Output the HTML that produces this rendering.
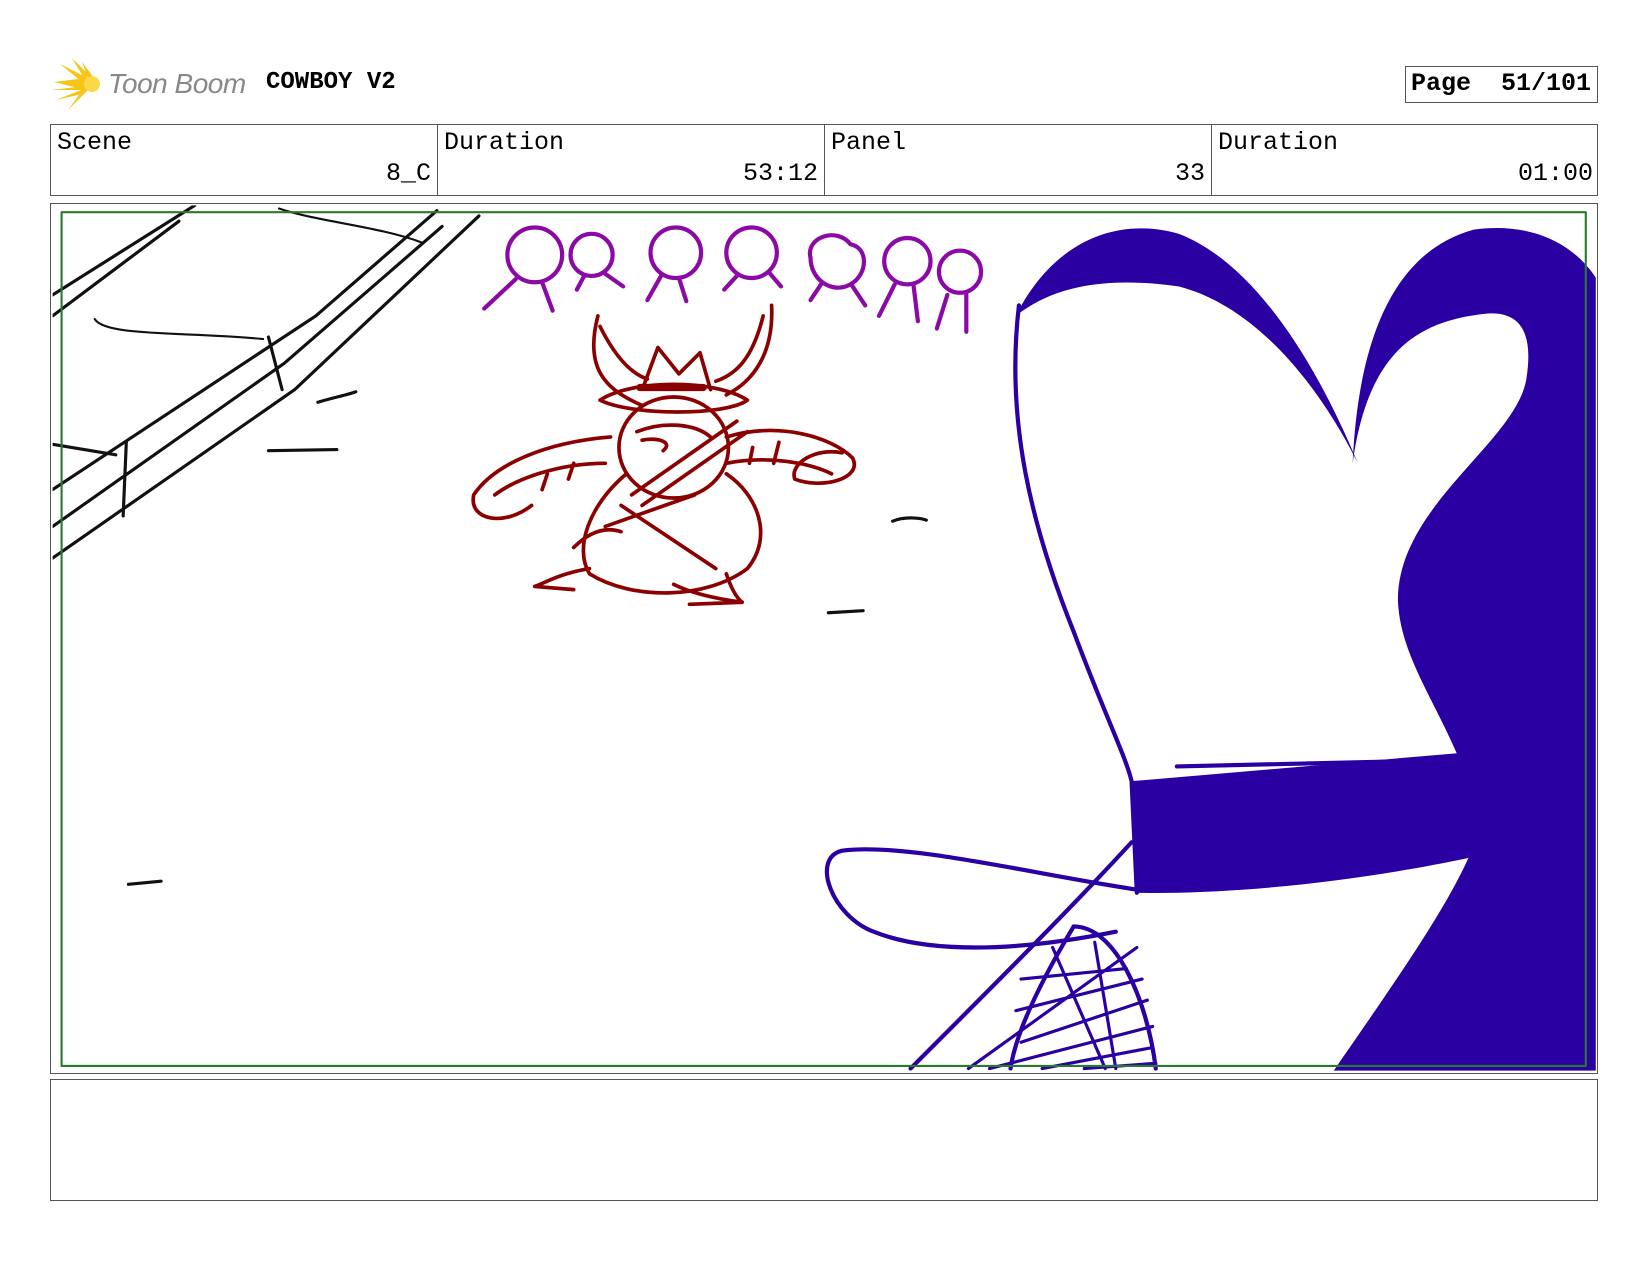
<!DOCTYPE html>
<html><head><meta charset="utf-8"><style>
body{margin:0;width:1650px;height:1275px;background:#fff;position:relative;overflow:hidden;font-family:"Liberation Mono",monospace}
.abs{position:absolute}
.tb{position:absolute;top:124px;height:72px;border:1px solid #555;box-sizing:border-box;width:1548px;left:50px}
.cell{position:absolute;top:0;height:70px;width:387px;border-right:1px solid #555;box-sizing:border-box}
.cell .l{position:absolute;left:6px;top:3px;font-size:25px}
.cell .v{position:absolute;right:6px;top:34px;font-size:25px}
</style></head><body>
<svg class="abs" style="left:52px;top:58px" width="56" height="54" viewBox="0 0 56 54">
<g fill="#f5c518"><path d="M2,24 L34,20 L40,26 L34,32 Z"/><path d="M8,6 L36,20 L30,24Z"/><path d="M20,0 L38,18 L32,20Z"/><path d="M4,42 L34,30 L30,36Z"/><path d="M16,52 L36,32 L32,30Z"/><path d="M30,4 L42,20 L36,20Z"/><path d="M0,32 L32,28 L32,32Z"/></g>
<circle cx="40" cy="26" r="8" fill="#fbd84a"/></svg>
<div class="abs" style="left:108px;top:68px;font-family:'Liberation Sans',sans-serif;font-style:italic;font-size:28px;color:#888;letter-spacing:-0.5px">Toon Boom</div>
<div class="abs" style="left:266px;top:69px;font-size:24px;font-weight:bold">COWBOY V2</div>
<div class="abs" style="left:1405px;top:66px;width:193px;height:37px;border:1px solid #555;box-sizing:border-box;font-size:25px;font-weight:bold;line-height:34px;text-align:right;padding-right:6px;white-space:pre">Page  51/101</div>
<div class="tb">
<div class="cell" style="left:0"><span class="l">Scene</span><span class="v">8_C</span></div>
<div class="cell" style="left:387px"><span class="l">Duration</span><span class="v">53:12</span></div>
<div class="cell" style="left:774px"><span class="l">Panel</span><span class="v">33</span></div>
<div class="cell" style="left:1161px;border-right:none"><span class="l">Duration</span><span class="v">01:00</span></div>
</div>
<div class="abs" style="left:50px;top:203px;width:1548px;height:871px;border:1px solid #555;box-sizing:border-box"></div>
<div class="abs" style="left:50px;top:1079px;width:1548px;height:122px;border:1px solid #555;box-sizing:border-box"></div>
<svg class="abs" style="left:0;top:0" width="1650" height="1275" viewBox="0 0 1567.5 1211" fill="none" stroke-linecap="round" stroke-linejoin="round">
<defs><clipPath id="c"><rect x="50" y="195" width="1466" height="822"/></clipPath></defs>
<g clip-path="url(#c)">
<g stroke="#111" stroke-width="3">
<path d="M50,280 L185,195"/><path d="M50,300 L170,210"/><path d="M50,465 L300,300 L415,200"/><path d="M50,500 L270,345 L420,215"/><path d="M50,530 L280,370 L455,205"/>
<path d="M50,422 L110,432"/><path d="M120,420 L117,490"/><path d="M255,320 L268,370"/>
<path d="M90,303 C100,320 180,315 250,322" stroke-width="2"/><path d="M265,198 C300,210 360,215 400,230" stroke-width="2"/>
<path d="M302,382 C315,378 330,375 338,372"/><path d="M255,428 L320,427"/><path d="M848,495 C860,490 875,492 880,494"/><path d="M787,582 L820,580"/><path d="M122,840 L153,837"/>
</g>
<g stroke="#8b0aa6" stroke-width="4">
<circle cx="508" cy="242" r="26"/><path d="M490,265 L460,293 M515,268 L525,295"/>
<circle cx="562" cy="242" r="20"/><path d="M555,262 L548,275 M575,260 L592,272"/>
<circle cx="642" cy="240" r="24"/><path d="M628,262 L615,285 M645,264 L652,286"/>
<circle cx="714" cy="240" r="24"/><path d="M700,262 L688,275 M730,258 L742,272"/>
<path d="M770,245 C765,225 795,215 808,232 C825,235 825,260 808,270 C790,280 770,265 770,245Z"/><path d="M780,270 L770,285 M810,272 L822,290"/>
<circle cx="862" cy="248" r="22"/><path d="M850,270 L835,300 M868,272 L872,305"/>
<circle cx="912" cy="258" r="20"/><path d="M900,280 L890,312 M918,280 L918,315"/>
</g>
<g stroke="#8b0000" stroke-width="3.5">
<path d="M568,300 C555,350 575,370 610,385 M733,290 C735,330 720,360 690,375"/>
<path d="M570,310 C585,340 600,355 615,360 M725,300 C715,340 700,355 680,362"/>
<path d="M612,365 L625,330 L645,355 L665,335 L675,370"/><path d="M608,368 L668,368" stroke-width="7"/>
<path d="M570,380 C600,360 680,360 710,380 C690,395 600,395 570,380Z"/>
<ellipse cx="640" cy="425" rx="52" ry="48"/>
<path d="M605,410 C630,400 660,402 675,415 M610,418 C625,415 640,420 630,428"/>
<path d="M595,450 C560,480 545,520 560,545 C600,570 670,570 710,540 C735,510 720,470 690,450"/>
<path d="M580,415 C520,420 470,440 450,470 C445,495 480,500 505,480"/>
<path d="M575,440 C530,440 490,455 470,470 M520,450 L515,465 M545,440 L540,455"/>
<path d="M690,415 C740,400 790,415 810,435 C820,455 780,465 755,455 C750,440 775,425 800,430"/>
<path d="M690,440 C730,432 770,440 790,450 M740,420 L735,440 M715,425 L712,440"/>
<path d="M560,540 C530,545 515,555 508,557 L545,560 M640,555 C660,565 690,570 705,572 L655,574"/>
<path d="M590,480 L680,540 M575,500 L660,470 M600,470 L700,400 M610,480 L710,410"/>
<path d="M545,520 C560,505 575,500 590,505 M690,545 C695,560 700,568 705,572"/>
</g>
<g fill="#2a00a3">
<path d="M965,300 C1000,230 1060,205 1120,222 C1180,245 1240,320 1290,440 C1250,360 1190,290 1120,272 C1050,262 1000,272 965,300Z"/>
<path d="M1285,440 C1290,330 1320,240 1400,218 C1460,210 1500,235 1520,270 L1520,1020 L1265,1020 C1320,940 1370,870 1395,815 L1385,718 C1360,660 1330,620 1328,570 C1328,480 1440,420 1450,360 C1458,310 1440,295 1410,298 C1350,305 1300,330 1285,440Z"/>
<path d="M1075,742 L1390,715 L1395,815 C1300,835 1180,850 1080,848Z"/>
</g>
<g stroke="#2a00a3" stroke-width="4">
<path d="M968,290 C955,400 980,500 1020,600 C1050,680 1070,720 1075,742 L1080,848"/>
<path d="M1118,728 L1380,722"/>
<path d="M1080,845 C980,830 860,800 800,808 C770,815 790,870 830,885 C880,905 960,905 1060,885"/>
<path d="M1075,800 C1020,860 950,930 865,1015"/>
<path d="M1020,880 C1060,880 1090,950 1098,1015"/><path d="M1020,880 C990,930 965,980 960,1015"/>
<path d="M920,1015 L1080,900 M970,990 L1090,950 M940,1015 L1095,975 M990,1015 L1095,995 M1030,1015 L1098,1010 M970,930 L1070,920 M965,960 L1085,930 M1000,900 L1050,1015 M1040,895 L1060,1015" stroke-width="3"/>
</g>
</g>
<rect x="58.5" y="201.5" width="1448" height="811" stroke="#2b7a2b" stroke-width="2"/>
</svg>
</body></html>
